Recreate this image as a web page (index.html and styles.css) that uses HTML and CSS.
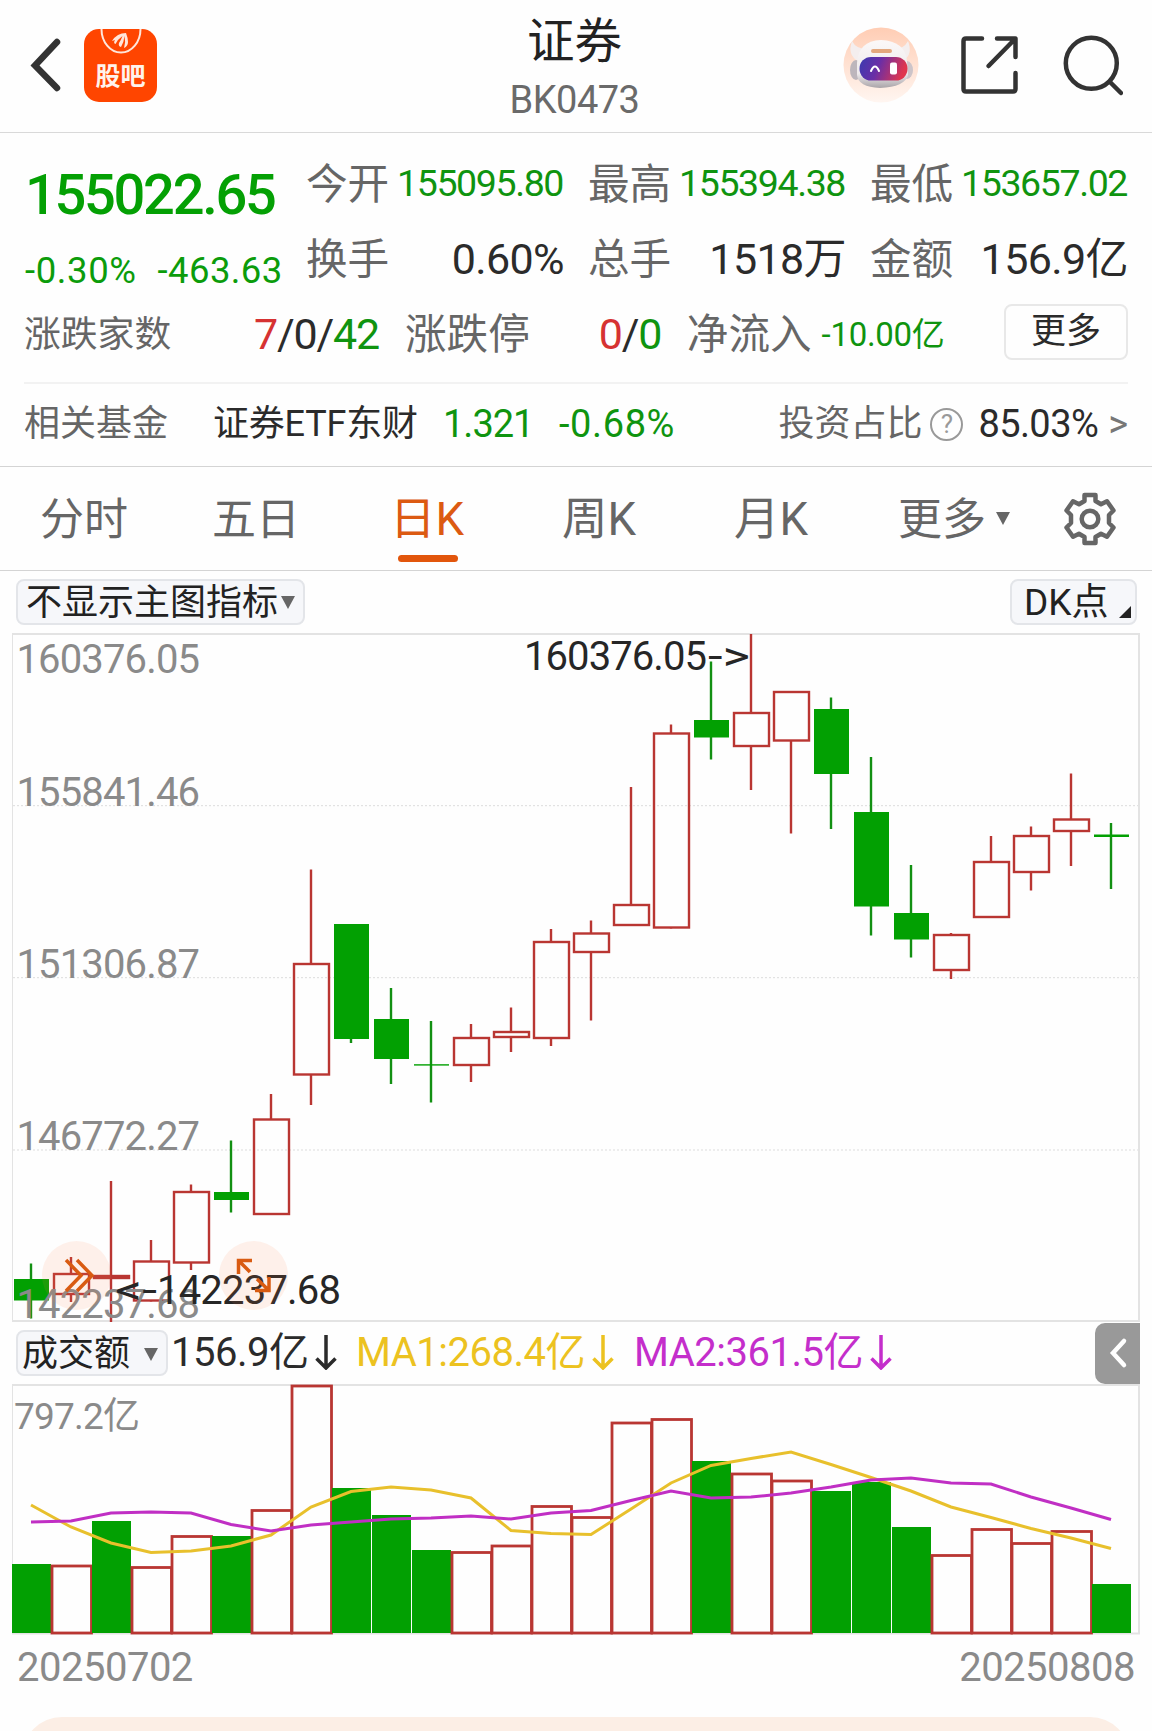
FILE: index.html
```
<!DOCTYPE html>
<html lang="zh-CN">
<head>
    <meta charset="UTF-8" />
    <meta name="viewport" content="width=device-width, initial-scale=1" />
    <title>证券 BK0473</title>
    <link rel="stylesheet" href="styles.css">
</head>
<body>
    <header class="header">
        <div class="header-left">
            <svg class="back-icon" width="34" height="56" viewBox="0 0 34 56"><path d="M28 5 L6 28.5 L28 51" /></svg>
            <div class="guba">
                <svg class="guba-badge" width="42" height="26" viewBox="0 0 42 26">
                    <path class="ring" d="M1.5 0 a19 23 0 0 0 39 0" />
                    <path class="feather" d="M12 12 Q17 4 26 4 Q28 9 28 13 Q28 17 24 19 Q26 13 24.500 7 Q24 13 21 18 Q18 17 19 14 Q21 11 22.500 7 Q18 10 15.500 15 Q13 14 15 11 Z" />
                </svg>
                <span>股吧</span>
            </div>
        </div>
        <div class="header-title">
            <h1>证券</h1>
            <p>BK0473</p>
        </div>
        <div class="header-right">
            <svg width="76" height="76" viewBox="0 0 76 76">
                <defs>
                    <linearGradient id="halo" x1="0" y1="0" x2="0" y2="1">
                        <stop offset="0" stop-color="#ffcdb4" /><stop offset="1" stop-color="#fff6f1" />
                    </linearGradient>
                    <linearGradient id="visor" x1="0" y1="0" x2="1" y2="0.2">
                        <stop offset="0" stop-color="#3a3bb0" /><stop offset="0.45" stop-color="#6a2ea6" /><stop offset="1" stop-color="#e0364e" />
                    </linearGradient>
                    <linearGradient id="shell" x1="0" y1="0" x2="0" y2="1">
                        <stop offset="0" stop-color="#fbf8f8" /><stop offset="0.7" stop-color="#eeeaec" /><stop offset="1" stop-color="#a9a4a8" />
                    </linearGradient>
                </defs>
                <circle cx="38" cy="38" r="37.5" fill="url(#halo)" />
                <path d="M9 14 Q4 28 15 34 L24 22 Q13 22 9 14z M65 14 Q70 27 61 33 L51 22 Q61 22 65 14z" fill="#f4eeee" />
                <ellipse cx="13" cy="43" rx="6" ry="10" fill="#bdb6bc" />
                <ellipse cx="64" cy="43" rx="6" ry="9" fill="#ccc4c9" />
                <path d="M14 36 Q15 14 38 13 Q62 14 64 34 L65 48 Q62 60 37 61 Q15 60 14 48z" fill="url(#shell)" />
                <rect x="16.500" y="30" width="48" height="23.500" rx="11.500" fill="url(#visor)" />
                <rect x="28" y="22" width="21" height="4" rx="2" fill="#e3a87e" />
                <path d="M28 44 Q32 35 36 44" fill="none" stroke="#fff" stroke-width="2" stroke-linecap="round" />
                <rect x="47" y="35.500" width="7" height="12" rx="2" fill="#fff" />
            </svg>
            <svg class="line-icon share-icon" width="60" height="60" viewBox="0 0 60 60">
                <path d="M22 3.5 H6 Q3.500 3.500 3.500 6 V54 Q3.500 56.500 6 56.500 H53 Q55.500 56.500 55.500 54 V38" />
                <path d="M37 3.500 H55.500 V22 M54.500 4.500 L28.500 31" />
            </svg>
            <svg class="line-icon" width="62" height="62" viewBox="0 0 62 62">
                <circle cx="30.300" cy="29.300" r="25.500" />
                <path d="M49 48 L60 59" />
            </svg>
        </div>
    </header>

    <section class="quote">
        <div class="quote-main">
            <div class="price-box">
                <div class="price">155022.65</div>
                <div class="change"><span>-0.30%</span><span>-463.63</span></div>
            </div>
            <div class="stats">
                <div class="stat"><label>今开</label><b class="small green">155095.80</b></div>
                <div class="stat"><label>最高</label><b class="small green">155394.38</b></div>
                <div class="stat"><label>最低</label><b class="small green">153657.02</b></div>
                <div class="stat"><label>换手</label><b>0.60%</b></div>
                <div class="stat"><label>总手</label><b>1518万</b></div>
                <div class="stat"><label>金额</label><b>156.9亿</b></div>
            </div>
        </div>
        <div class="breadth">
            <label class="breadth-count">涨跌家数</label>
            <b class="breadth-num"><i class="red">7</i>/0/<i class="green">42</i></b>
            <label>涨跌停</label>
            <b class="limit-num"><i class="red">0</i>/<i class="green">0</i></b>
            <label>净流入</label>
            <b class="inflow green">-10.00亿</b>
            <button class="more-btn">更多</button>
        </div>
        <div class="fund">
            <label>相关基金</label>
            <span class="fund-name">证券ETF东财</span>
            <span class="fund-price green">1.321</span>
            <span class="fund-rate green">-0.68%</span>
            <label class="fund-share">投资占比</label>
            <span class="help">?</span>
            <span class="fund-ratio">85.03%</span>
            <span class="fund-go">&gt;</span>
        </div>
    </section>

    <nav class="tabs">
        <a class="tab">分时</a>
        <a class="tab">五日</a>
        <a class="tab active">日K</a>
        <a class="tab">周K</a>
        <a class="tab">月K</a>
        <a class="tab">更多<i class="caret"></i></a>
        <svg class="gear" width="54" height="54" viewBox="0 0 54 54">
            <path d="M21.500 3 H32.500 V9 L38 12.200 L44 9.200 L50.500 18.500 L46 23 V31 L50.500 35.500 L44 44.800 L38 41.800 L32.500 45 V51 H21.500 V45 L16 41.800 L10 44.800 L3.500 35.500 L8 31 V23 L3.500 18.500 L10 9.200 L16 12.200 L21.500 9 Z" />
            <circle cx="27" cy="27" r="8.300" />
        </svg>
    </nav>

    <main class="chart">
        <div class="chart-bar">
            <button class="pill">不显示主图指标<i class="caret"></i></button>
            <button class="pill dk">DK点<i class="corner"></i></button>
        </div>
        <svg id="kline" class="plot" width="1152" height="690" viewBox="0 632 1152 690"></svg>
        <div class="vol-bar">
            <button class="pill vol-pill">成交额<i class="caret"></i></button>
            <span class="vol-now">156.9亿<svg class="down" width="22" height="36" viewBox="0 0 22 36"><path d="M11 1 V34 M1.500 24.500 L11 34 L20.500 24.500" /></svg></span>
            <span class="vol-ma1">MA1:268.4亿<svg class="down" width="22" height="36" viewBox="0 0 22 36"><path d="M11 1 V34 M1.500 24.500 L11 34 L20.500 24.500" /></svg></span>
            <span class="vol-ma2">MA2:361.5亿<svg class="down" width="22" height="36" viewBox="0 0 22 36"><path d="M11 1 V34 M1.500 24.500 L11 34 L20.500 24.500" /></svg></span>
            <button class="drawer"><svg width="20" height="32" viewBox="0 0 20 32"><path d="M16 4 L5 16 L16 28" /></svg></button>
        </div>
        <svg id="volume" class="plot" width="1152" height="252" viewBox="0 1384 1152 252"></svg>
        <div class="dates"><span>20250702</span><span>20250808</span></div>
    </main>
    <div class="banner"></div>
    <script src="script.js"></script>
</body>
</html>
```
FILE: styles.css
```
* {
    box-sizing: border-box;
}
body {
    margin: 0;
    height: 1731px;
    overflow: hidden;
    background: #fefefe;
    color: #2b2b2b;
    font-family: Roboto, "Noto Sans CJK SC", sans-serif;
    display: flex;
    flex-direction: column;
}
h1, p { margin: 0; font-weight: 400; }
b { font-weight: 400; }
i { font-style: normal; }
button {
    font-family: inherit;
    color: inherit;
    padding: 0;
    background: none;
}
svg { display: block; flex: none; }
.red { color: #d63232; }
.green { color: #0f940f; }

/* header */
.header {
    height: 133px;
    flex: none;
    border-bottom: 1px solid #d9d9d9;
    display: grid;
    grid-template-columns: 1fr auto 1fr;
}
.header-left {
    display: flex;
    align-items: flex-start;
    padding: 29px 0 0 29px;
    gap: 21px;
}
.back-icon {
    margin-top: 8px;
    fill: none;
    stroke: #333;
    stroke-width: 6.500;
    stroke-linecap: round;
}
.guba {
    width: 73px;
    height: 73px;
    border-radius: 15px;
    background: #ff4500;
    color: #fff3ec;
    display: flex;
    flex-direction: column;
    align-items: center;
    font-size: 25px;
    font-weight: 700;
    line-height: 43px;
}
.guba-badge .ring {
    fill: none;
    stroke: #ffe6da;
    stroke-width: 2;
}
.guba-badge .feather { fill: #ffe6da; }
.header-title {
    text-align: center;
    padding-top: 12px;
    padding-right: 3px;
}
.header-title h1 {
    font-size: 47.500px;
    line-height: 60px;
    color: #222;
}
.header-title p {
    font-size: 38px;
    line-height: 56px;
    letter-spacing: -0.5px;
    color: #6a6a6a;
}
.header-right {
    display: flex;
    justify-content: flex-end;
    align-items: flex-start;
    padding: 27px 29px 0 0;
    gap: 41px;
}
.line-icon {
    margin-top: 7px;
    fill: none;
    stroke: #333;
    stroke-width: 4.500;
    stroke-linecap: round;
    stroke-linejoin: round;
}
.share-icon { margin-top: 8px; }

/* quote panel */
.quote {
    height: 334px;
    flex: none;
    padding: 0 24px;
    border-bottom: 1px solid #d4d4d4;
}
label { color: #666; }
.quote-main {
    display: flex;
    height: 164px;
    padding-top: 14px;
}
.price-box {
    width: 282px;
    color: #0b9c0b;
}
.price {
    font-size: 56px;
    font-weight: 500;
    line-height: 97px;
    letter-spacing: -2.3px;
    color: #04a004;
    padding-left: 1px;
}
.change {
    display: flex;
    gap: 21px;
    font-size: 36.500px;
    line-height: 54px;
    letter-spacing: 0.4px;
    padding-left: 1px;
}
.change span:first-child { letter-spacing: 0.6px; }
.stats {
    flex: 1;
    display: grid;
    grid-template-columns: repeat(3, 258px);
    column-gap: 24px;
    grid-auto-rows: 75px;
}
.stat {
    display: flex;
    justify-content: space-between;
    line-height: 75px;
}
.stat label, .breadth label {
    font-size: 41.600px;
}
.stat b {
    font-size: 43px;
    letter-spacing: -0.6px;
}
.stat b.small {
    font-size: 37.5px;
    letter-spacing: -1.4px;
    line-height: 73px;
    margin-right: 1px;
}
.breadth {
    height: 87px;
    display: flex;
    line-height: 75px;
    border-bottom: 2px solid #f2f2f2;
}
.breadth .breadth-count {
    font-size: 36.800px;
    width: 230px;
}
.breadth b {
    font-size: 43px;
    letter-spacing: -1.2px;
}
.breadth-num { width: 151px; }
.limit-num {
    width: 157px;
    padding-left: 69px;
}
.breadth .inflow {
    font-size: 33px;
    letter-spacing: -0.3px;
    padding-left: 10px;
}
.more-btn {
    width: 124px;
    height: 56px;
    margin: 7px 0 0 auto;
    border: 2px solid #e8e8e8;
    border-radius: 8px;
    font-size: 35px;
    line-height: 50px;
}
.fund {
    display: flex;
    line-height: 80px;
    font-size: 36px;
    white-space: nowrap;
}
.fund-name { margin-left: 45px; width: 230px; letter-spacing: -0.2px; }
.fund-price, .fund-rate, .fund-ratio { font-size: 38px; letter-spacing: -1px; }
.fund-price { width: 116px; }
.fund-rate { letter-spacing: 0.6px; }
.fund-share { margin-left: auto; }
.fund-ratio { letter-spacing: -0.6px; }
.help {
    width: 33px;
    height: 33px;
    margin: 24px 15px 0 8px;
    border: 2.500px solid #999;
    border-radius: 50%;
    color: #999;
    font-size: 26px;
    line-height: 28px;
    text-align: center;
}
.fund-go { color: #777; font-size: 38px; margin-left: 10px; }

/* period tabs */
.tabs {
    height: 104px;
    flex: none;
    display: flex;
    border-bottom: 1px solid #d4d4d4;
    padding-left: 40px;
}
.tab {
    width: 172px;
    font-size: 44px;
    line-height: 100px;
    padding-top: 3px;
    color: #666;
    display: flex;
    align-items: center;
    position: relative;
}
.tab:nth-child(3), .tab:nth-child(4), .tab:nth-child(5) { font-size: 45.500px; }
.tab:nth-child(3) { width: 170px; padding-left: 6px; }
.tab:nth-child(4) { padding-left: 8px; }
.tab:nth-child(5) { padding-left: 8px; }
.tab:nth-child(6) { width: 165px; }
.tab.active { color: #dc5a12; }
.tab.active::after {
    content: "";
    position: absolute;
    left: 14px;
    bottom: 8px;
    width: 60px;
    height: 7px;
    border-radius: 3.500px;
    background: #e2560c;
}
.caret {
    display: inline-block;
    border: 7.500px solid transparent;
    border-top: 13px solid #666;
    border-bottom: 0;
}
.tab .caret { margin: 0 0 3px 10px; }
.gear {
    margin-top: 25px;
    fill: none;
    stroke: #666;
    stroke-width: 4.500;
    stroke-linejoin: round;
}

/* charts */
.chart-bar {
    height: 61px;
    display: flex;
    justify-content: space-between;
    align-items: flex-start;
    padding: 8px 15px 0 16px;
}
.pill {
    height: 46px;
    display: flex;
    align-items: center;
    border: 2px solid #e3e5e9;
    border-radius: 8px;
    background: #f6f7fa;
    font-size: 36px;
    line-height: 40px;
    padding: 2px 8px 0;
    color: #222;
}
.chart-bar .caret { margin: 0 0 2px 3px; }
.dk { width: 127px; position: relative; padding-left: 12px; font-size: 37px; }
.corner {
    position: absolute;
    right: 4px;
    bottom: 5px;
    border-left: 12px solid transparent;
    border-bottom: 12px solid #222;
}
.plot { font-size: 40px; }
.grid { stroke: #dcdcdc; stroke-dasharray: 2 2; }
.frame { fill: none; stroke: #e3e3e3; stroke-width: 2; }
.up { fill: none; stroke: #b93632; stroke-width: 2.400; }
.up-vol { fill: none; stroke: #b93632; stroke-width: 2.800; }
.fall { fill: #02a002; }
.wick-down { stroke: #129012; stroke-width: 2.400; }
.axis { fill: #8a8a8a; }
.mark { fill: #262626; }
.float-bg { fill: rgba(255, 130, 70, 0.11); }
.float-icon { fill: none; stroke: #d95b12; stroke-width: 3.500; }
.ma { fill: none; stroke-width: 3; }
.ma1 { stroke: #e8c02c; }
.ma2 { stroke: #c02fc4; }
.vol-bar {
    height: 62px;
    display: flex;
    align-items: center;
    padding-left: 16px;
    font-size: 40px;
}
.vol-pill { width: 152px; padding: 2px 8px 0 4px; justify-content: space-between; margin-right: 3px; }
.vol-bar span { display: flex; align-items: center; line-height: 60px; white-space: nowrap; letter-spacing: -0.5px; }
.down {
    margin-left: 7px;
    margin-bottom: 3px;
    fill: none;
    stroke: currentColor;
    stroke-width: 3.500;
}
.vol-now { width: 185px; }
.vol-ma1 { width: 278px; color: #ecc220; }
.vol-ma2 { color: #c42ecb; }
.drawer {
    width: 45px;
    height: 61px;
    margin: 0 12px 0 auto;
    border: 0;
    border-radius: 10px 0 0 10px;
    background: #999;
    display: flex;
    align-items: center;
    justify-content: center;
}
.drawer path {
    fill: none;
    stroke: #fff;
    stroke-width: 4.500;
    stroke-linecap: round;
}
.dates {
    display: flex;
    justify-content: space-between;
    padding: 1px 17px 0;
    font-size: 40px;
    line-height: 62px;
    letter-spacing: -0.500px;
    color: #8a8a8a;
}
.banner {
    flex: none;
    height: 90px;
    margin: 18px 22px 0;
    border-radius: 40px;
    background: #fceee5;
}
```
FILE: script.js
```
// kind, high, open/close top, open/close bottom, low (plot units)
const candles = [
    ['g', 1263.5, 1279, 1300.5, 1318.5],
    ['r', 1257, 1273, 1295, 1302],
    ['r', 1181, 1275, 1279, 1322],
    ['r', 1240, 1260.5, 1301.5, 1301.5],
    ['r', 1184.5, 1191, 1263.5, 1270],
    ['g', 1140.5, 1192, 1200, 1212.5],
    ['r', 1094, 1118.5, 1215, 1215],
    ['r', 869.5, 963, 1075.5, 1105],
    ['g', 924, 924, 1039, 1043],
    ['g', 988, 1019, 1059, 1084],
    ['g', 1021, 1064.2, 1065.6, 1102.5],
    ['r', 1024, 1037, 1066, 1082],
    ['r', 1007.5, 1031, 1038, 1052],
    ['r', 929, 941, 1039, 1046],
    ['r', 920.5, 932.5, 953, 1020.5],
    ['r', 787, 904, 926, 926],
    ['r', 724.5, 732.5, 928.5, 928.5],
    ['g', 661.5, 720, 737.5, 759.5],
    ['r', 634, 712, 747, 790],
    ['r', 691, 691, 741.5, 833.5],
    ['g', 697.5, 709, 774, 829],
    ['g', 757, 812, 906.5, 935.5],
    ['g', 865, 913, 939.5, 957.5],
    ['r', 933, 934, 971, 979],
    ['r', 836, 861, 918, 918],
    ['r', 826.5, 835, 873, 890.5],
    ['r', 773.5, 818.5, 832, 866],
    ['g', 823, 834.5, 837, 889]
];
const volumes = [1564, 1565, 1521, 1566.5, 1535.5, 1536, 1509.5, 1385, 1488, 1515, 1550, 1551.5, 1545, 1505.5,
    1516.5, 1422, 1418.5, 1461, 1473, 1480, 1491, 1482, 1527, 1554.5, 1528.5, 1542.5, 1530.5, 1584];
const ma1 = [1505, 1527, 1543, 1552.5, 1551, 1546, 1535, 1507, 1491.5, 1487, 1490, 1498, 1530.5, 1533.5,
    1534.5, 1509, 1483, 1465.5, 1458.5, 1452, 1464.5, 1477.5, 1491, 1507, 1517.5, 1528.5, 1538, 1548.5];
const ma2 = [1522, 1521, 1513, 1512, 1513, 1524.5, 1531, 1525, 1522, 1519, 1518, 1516, 1519, 1513,
    1510.5, 1500.5, 1491, 1498, 1497, 1493, 1487, 1480, 1478, 1483, 1484, 1497, 1508, 1519.5];

const centerX = i => 31 + i * 40;
const label = (text, x, y, width, cls, adjust = 'spacing') =>
    `<text class="${cls}" x="${x}" y="${y}" textLength="${width}" lengthAdjust="${adjust}">${text}</text>`;

function drawKline() {
    let s = '';
    [805.7, 977.7, 1150].forEach(y => {
        s += `<line class="grid" x1="13" x2="1139" y1="${y}" y2="${y}" />`;
    });
    s += '<path class="frame" d="M12 634 H1139 V1321 H12" /><path class="frame" style="stroke-width:1" d="M12.5 634 V1321" />';
    candles.forEach(([kind, high, top, bottom, low], i) => {
        const x = centerX(i);
        if (kind === 'g') {
            s += `<path class="wick-down" d="M${x} ${high} V${low}" />`;
            s += `<rect class="fall" x="${x - 17}" y="${top}" width="35" height="${bottom - top}" />`;
        } else {
            s += `<path class="up" d="M${x} ${high} V${top + 1} M${x} ${bottom - 1} V${low}" />`;
            s += `<rect class="up" x="${x - 17}" y="${top + 1}" width="35" height="${bottom - top - 2}" />`;
        }
    });
    s += label('160376.05', 16.5, 672.5, 183.5, 'axis');
    s += label('155841.46', 16.5, 806, 183.5, 'axis');
    s += label('151306.87', 16.5, 978, 183.5, 'axis');
    s += label('146772.27', 16.5, 1150, 183.5, 'axis');
    s += label('142237.68', 16.5, 1318, 183.5, 'axis');
    s += label('160376.05', 524, 670, 183, 'mark') + label('-&gt;', 708, 670, 42, 'mark', 'spacingAndGlyphs');
    s += label('&lt;-', 115, 1304, 42, 'mark', 'spacingAndGlyphs') + label('142237.68', 157, 1304, 184, 'mark');
    s += '<circle class="float-bg" cx="76.5" cy="1275.5" r="34.5" /><circle class="float-bg" cx="253.5" cy="1275.5" r="34.5" />';
    s += '<path class="float-icon" d="M66 1260 L81 1275.5 L66 1291 M77 1260 L92 1275.5 L77 1291" />';
    s += '<path class="float-icon" d="M252 1260.5 H238.500 V1274 M239 1261 L250 1272 M255 1290.500 H269 V1277 M268.500 1290 L257 1279" />';
    document.getElementById('kline').innerHTML = s;
}

function drawVolume() {
    let s = '<path class="frame" d="M12 1385 H1139 V1633.500 H12" /><path class="frame" style="stroke-width:1" d="M12.5 1385 V1633" />';
    volumes.forEach((y, i) => {
        const x = centerX(i);
        // the third session closed up but its turnover is drawn as falling
        if (candles[i][0] === 'g' || i === 2) {
            s += `<rect class="fall" x="${x - 19}" y="${y}" width="39" height="${1633 - y}" />`;
        } else {
            s += `<rect class="up-vol" x="${x - 19}" y="${y + 1}" width="39.5" height="${1632 - y}" />`;
        }
    });
    [['ma1', ma1], ['ma2', ma2]].forEach(([cls, points]) => {
        s += `<polyline class="ma ${cls}" points="${points.map((y, i) => centerX(i) + ',' + y).join(' ')}" />`;
    });
    s += '<text class="axis" x="14" y="1428.500" font-size="37" textLength="126">797.2亿</text>';
    document.getElementById('volume').innerHTML = s;
}

drawKline();
drawVolume();
```
